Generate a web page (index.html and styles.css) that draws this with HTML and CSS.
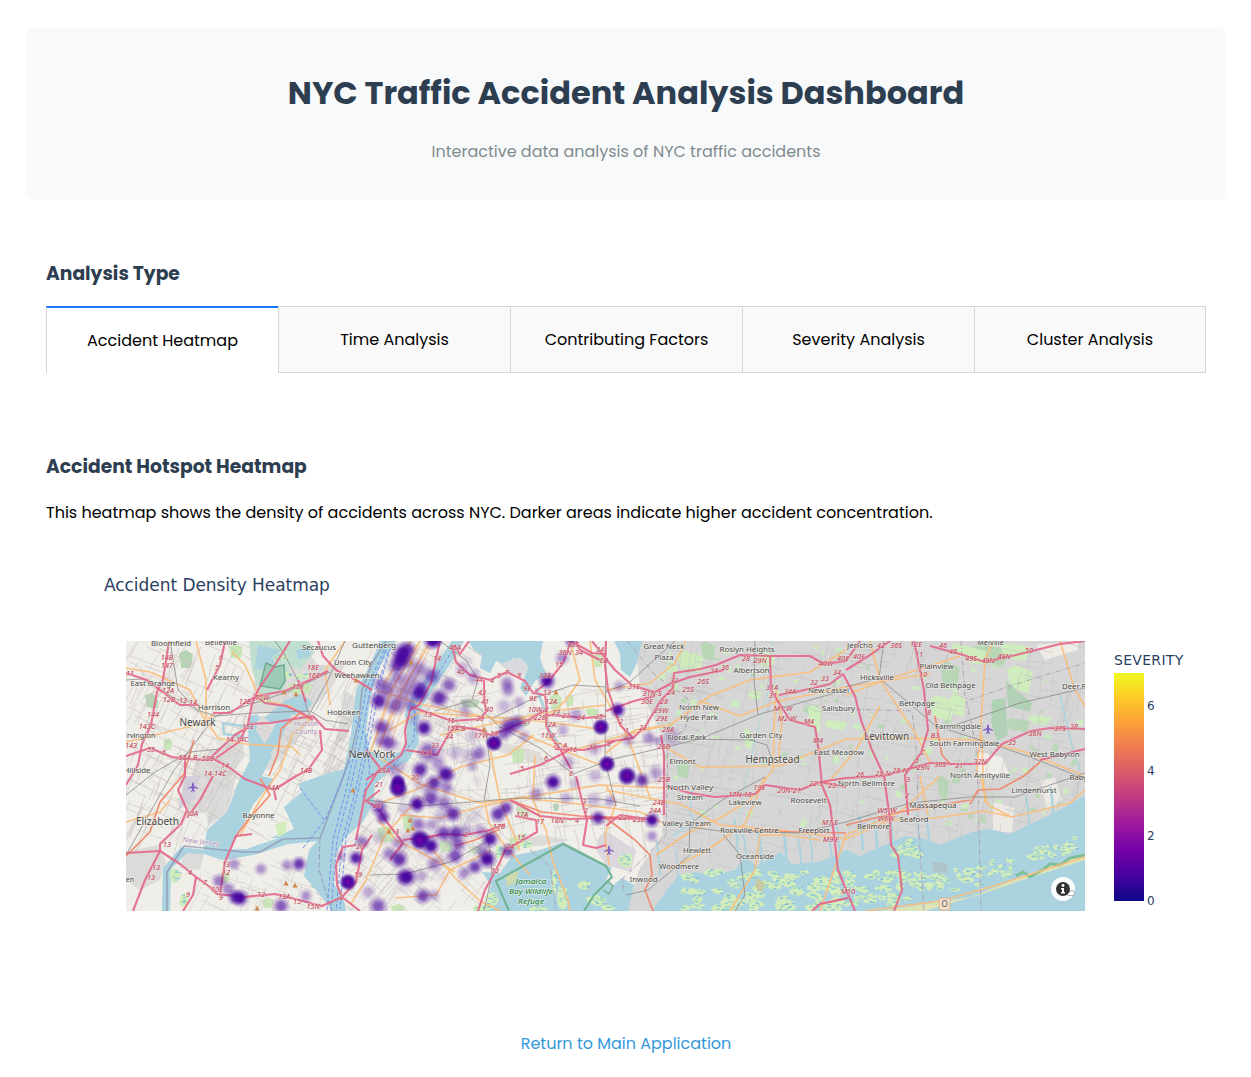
FILE: index.html
```html
<!DOCTYPE html>
<html lang="en">
<head>
<meta charset="utf-8">
<title>NYC Traffic Accident Analysis Dashboard</title>
<link rel="stylesheet" href="styles.css">
</head>
<body>
<main class="page">
  <header class="hero">
    <h1 class="hero-title">NYC Traffic Accident Analysis Dashboard</h1>
    <p class="hero-subtitle">Interactive data analysis of NYC traffic accidents</p>
  </header>
  <section class="analysis">
    <h3 class="heading">Analysis Type</h3>
    <nav class="tabs">
      <a class="tab tab-active">Accident Heatmap</a>
      <a class="tab">Time Analysis</a>
      <a class="tab">Contributing Factors</a>
      <a class="tab">Severity Analysis</a>
      <a class="tab">Cluster Analysis</a>
    </nav>
  </section>
  <section class="panel">
    <h3 class="heading">Accident Hotspot Heatmap</h3>
    <p class="description">This heatmap shows the density of accidents across NYC. Darker areas indicate higher accident concentration.</p>
    <div class="chart">
      <div class="chart-title">Accident Density Heatmap</div>
      <div class="chart-body">
        <svg class="map" id="map" viewBox="126 641 959 270" width="959" height="270"></svg>
        <div class="legend">
          <div class="legend-title">SEVERITY</div>
          <div class="legend-scale">
            <div class="legend-bar"></div>
            <div class="legend-ticks"><span>6</span><span>4</span><span>2</span><span>0</span></div>
          </div>
        </div>
      </div>
    </div>
  </section>
  <footer class="footer"><a class="return">Return to Main Application</a></footer>
</main>
<script src="map.js"></script>
</body>
</html>
```
FILE: styles.css
```css
* { box-sizing: border-box; }
body { margin: 0; background: #fff; color: #000; font-family: Poppins, Inter, sans-serif; font-size: 16px; }
.page { width: 1200px; margin: 0 25px 0 26px; padding-top: 28px; }
.hero { height: 172px; border-radius: 8px; background: #f8f9fb; text-align: center; padding-top: 40px; }
.hero-title { margin: 0; font-size: 32px; line-height: 50px; font-weight: 700; color: #2c3e50; }
.hero-subtitle { margin: 22px 0 0; line-height: 24px; color: #7f8c8d; }
.analysis, .panel { padding: 0 20px; }
.analysis { padding-top: 60px; }
.heading { margin: 0; font-size: 18.72px; line-height: 28px; font-weight: 700; color: #2c3e50; white-space: nowrap; }
.tabs { display: flex; height: 67px; margin-top: 18px; }
.tab { width: 232px; display: flex; align-items: center; justify-content: center; white-space: nowrap; background: #f9f9f9; border: 1px solid #d6d6d6; border-right: 0; }
.tab:last-child { border-right: 1px solid #d6d6d6; }
.tab-active { background: #fff; border-top: 2px solid #1975fa; border-bottom: 0; padding-bottom: 1px; }
.panel { padding-top: 80px; }
.description { margin: 20px 0 0; line-height: 24px; white-space: nowrap; }
.chart { padding: 48px 0 0 58px; font-family: Verdana, "DejaVu Sans", sans-serif; color: #2a3f5f; }
.chart-title { font-size: 17px; line-height: 24px; letter-spacing: -.05px; }
.chart-body { display: flex; gap: 29px; padding: 44px 0 0 22px; }
.map { display: block; flex: none; overflow: hidden; }
.legend { padding-top: 10px; }
.legend-title { font-size: 14px; line-height: 18px; letter-spacing: .3px; }
.legend-scale { display: flex; margin-top: 4px; gap: 3px; }
.legend-bar { width: 30px; height: 228px; background: linear-gradient(to top, #0d0887 0%, #46039f 11.1%, #7201a8 22.2%, #9c179e 33.3%, #bd3786 44.4%, #d8576b 55.6%, #ed7953 66.7%, #fb9f3a 77.8%, #fdca26 88.9%, #f0f921 100%); }
.legend-ticks { display: flex; flex-direction: column; gap: 49px; padding-top: 25px; font-size: 12px; line-height: 16px; }
.footer { padding-top: 121px; text-align: center; line-height: 24px; }
.return { color: #3498db; }
.map-label { font-family: "Noto Sans", sans-serif; fill: #484848; stroke: #f5f3ee; stroke-opacity: .65; stroke-width: 1.4px; paint-order: stroke; text-anchor: middle; }
.map-ref { font-family: "Noto Sans", sans-serif; font-size: 7.3px; font-style: italic; fill: #c0304a; stroke: #f0e6e4; stroke-opacity: .6; stroke-width: 1px; paint-order: stroke; text-anchor: middle; }
.map-region { fill: #ad8bb5; }
.map-park { fill: #2f8a45; font-style: italic; font-weight: 500; }
```
FILE: map.js
```js
const map = document.getElementById('map');
const parts = [];
let seed = 7;
const rnd = () => (seed = (seed * 16807) % 2147483647) / 2147483647;
const span = (a, b) => a + rnd() * (b - a);
const poly = (pts, fill, extra = '') => parts.push(`<polygon points="${pts}" fill="${fill}" ${extra}/>`);
const line = (pts, color, w, extra = '') => parts.push(`<polyline points="${pts}" fill="none" stroke="${color}" stroke-width="${w}" stroke-linejoin="round" ${extra}/>`);
const WATER = '#aad3df', MARSH = '#d2ecbb';

parts.push(`<defs>
<radialGradient id="heat"><stop offset="0" stop-color="#45039f"/><stop offset=".35" stop-color="#45039f" stop-opacity=".88"/><stop offset=".65" stop-color="#45039f" stop-opacity=".38"/><stop offset="1" stop-color="#45039f" stop-opacity="0"/></radialGradient>
<radialGradient id="hot"><stop offset="0" stop-color="#7a05a6"/><stop offset=".35" stop-color="#5402a3"/><stop offset=".6" stop-color="#3c0299" stop-opacity=".85"/><stop offset="1" stop-color="#45039f" stop-opacity="0"/></radialGradient>
<clipPath id="west"><path d="M126 641H612L640 690 662 735 665 790 662 835 640 868 625 911H126Z"/></clipPath>
<clipPath id="east"><path d="M636 641H1085V795L1035 820 1010 833 940 843 905 838 846 848 780 850 735 868 680 872 652 911H625L662 835 665 740Z"/></clipPath>
</defs>`);
parts.push('<rect x="126" y="641" width="959" height="270" fill="#f0eee8"/>');
poly('636,641 1085,641 1085,911 625,911 640,868 662,835 665,790 662,735 640,690', '#d6d6d6');

// built-up and industrial land west of the Hudson
['272,641 300,641 318,665 345,665 330,690 308,712 250,712 255,680','255,716 315,716 300,735 270,770 252,768','178,776 192,776 196,760 240,735 245,755 208,812 190,815','205,794 236,776 228,812 208,826','126,852 158,845 166,862 160,880 140,890 126,880','185,848 205,850 200,870 180,868','345,690 358,700 345,740 335,745','345,757 320,776 335,776','500,845 540,835 570,840 540,846'].forEach(p => poly(p, '#dcdbda'));
poly('186,776 200,776 194,800 178,810', '#d4cfdd');
poly('606,831 636,850 631,872 606,865 596,850 598,838', '#dcd6df');
poly('480,738 505,743 540,752 548,768 530,762 500,752', '#dfdcdb');

// parks
[[151,700,12,14],[168,744,9,12],[186,659,14,18],[154,703,9,10],[236,651,14,14],[300,688,25,11],[404,656,8,20],[386,834,18,16],[408,822,11,16],[518,755,14,16],[523,812,14,12],[556,703,12,20],[570,700,8,12],[470,703,20,9],[523,722,15,8],[446,846,14,11],[515,843,12,13],[556,807,6,8],[476,850,12,8],[398,911,14,14],[268,903,12,10],[225,877,10,11],[316,884,12,7],[592,712,13,8],[598,660,10,14],[540,672,12,9]].forEach(([x,y,w,h]) => poly(`${x-w/2},${y-h/3} ${x},${y-h/2} ${x+w/2},${y-h/4} ${x+w/3},${y+h/2} ${x-w/3},${y+h/2}`, rnd() > .45 ? '#c8e6b6' : '#b6d3b4'));
for (let i = 0; i < 150; i++) {
  const x = span(645, 1080), y = span(643, 825), w = span(2, 8), h = span(2, 8);
  poly(`${x},${y} ${x+w},${y+span(-2,2)} ${x+w*.8},${y+h} ${x-w*.2},${y+h*.8}`, rnd() > .3 ? '#cdeac0' : '#bad8b7', 'clip-path="url(#east)"');
}
[[690,662,28,22,0],[708,651,15,20,1],[766,660,18,18,0],[755,695,15,9,0],[748,739,9,22,0],[815,718,14,28,0],[836,725,24,10,0],[942,708,26,26,0],[958,705,16,25,0],[950,675,20,28,1],[990,655,40,22,1],[1015,652,30,18,0],[1020,679,26,28,0],[976,656,20,18,0],[1018,725,24,14,1],[960,650,18,14,0],[683,770,14,18,1],[943,787,12,24,1],[672,668,12,14,0],[1040,720,22,10,0]].forEach(([x,y,w,h,d]) => poly(`${x-w/2},${y-h/3} ${x-w/5},${y-h/2} ${x+w/2},${y-h/4} ${x+w/3},${y+h/2} ${x-w/3},${y+h/3}`, d ? '#b8d6b6' : '#cfecbd'));
poly('992,700 1005,698 1008,735 997,741 991,722', '#b0d2b4');
poly('1006,681 1032,703 1030,712 1008,706', '#b0d2b4');
poly('980,752 1002,757 1010,776 978,776 975,760', '#efede7');
poly('1036,645 1078,641 1078,650 1045,660', '#efebe5');
poly('1040,780 1055,778 1062,800 1047,810', '#ece9e4');
poly('994,802 1014,808 1012,832 992,832', '#ece9e4');

// local streets
const streets = (clip, x0, x1, y0, y1, n, color, ang, w) => {
  let d = '';
  for (let i = 0; i < n; i++) {
    const x = span(x0, x1), y = span(y0, y1), l = span(9, 42), a = ang + (rnd() > .5 ? Math.PI / 2 : 0) + span(-.12, .12);
    d += `M${x.toFixed(1)} ${y.toFixed(1)}q${(Math.cos(a)*l/2+span(-2,2)).toFixed(1)} ${(Math.sin(a)*l/2).toFixed(1)} ${(Math.cos(a)*l).toFixed(1)} ${(Math.sin(a)*l).toFixed(1)}`;
  }
  parts.push(`<g clip-path="url(#${clip})"><path d="${d}" fill="none" stroke="${color}" stroke-width="${w}"/></g>`);
};
streets('west', 126, 250, 641, 830, 240, '#c9c6c3', .45, .6);
streets('west', 270, 350, 700, 830, 120, '#c5c1bf', -1.05, .6);
streets('west', 200, 330, 855, 911, 60, '#cfccc9', .4, .6);
streets('west', 370, 470, 641, 800, 160, '#c8c4c5', .5, .6);
streets('west', 440, 665, 690, 830, 230, '#cbc7c6', -.15, .6);
streets('west', 345, 500, 800, 911, 160, '#cbc7c6', .7, .6);
streets('east', 640, 1085, 641, 870, 400, '#c4c4c4', .2, .6);

// water
poly('249,641 308,641 315,652 300,670 290,665 284,690 260,695 252,670', '#c0dfcf');
['258,645 280,650 270,672 255,668','286,700 300,694 313,702 306,712 290,716 272,724 264,718','296,650 312,645 310,656 298,660'].forEach(p => poly(p, WATER));
poly('249,716 258,714 256,730 272,756 262,776 274,779 253,805 238,835 227,853 203,853 207,830 227,812 238,784 250,760 248,737', WATER);
poly('278,720 292,713 282,737 270,754 260,752 270,735', WATER);
poly('162,911 163,868 181,847 205,850 246,849 282,837 320,835 320,841 288,844 254,855 222,860 204,854 187,853 171,869 170,911', WATER);
poly('380,641 396,641 378,669 370,700 366,730 369,750 384,758 402,751 407,738 405,714 413,693 432,671 449,645 452,641 464,641 453,660 438,682 422,706 417,724 419,743 408,761 389,772 375,784 374,802 363,822 345,838 335,855 334,884 344,900 346,911 332,911 322,897 304,876 309,850 319,839 270,838 294,829 284,807 302,792 298,784 320,776 344,769 351,735 356,690 370,665', WATER);
poly('468,641 543,641 540,658 546,675 535,681 526,696 520,688 527,670 513,658 506,666 496,661 490,673 480,668 482,655 474,650', WATER);
poly('500,664 520,657 529,667 522,677 508,671', '#d9dade');
poly('614,641 642,641 637,663 630,677 621,670 620,653', WATER);
line('536,688 545,710 549,730 560,746', WATER, 3);
line('245,737 224,734 223,723 248,727 260,717', WATER, 2.5);
poly('485,911 491,885 482,872 500,873 512,856 540,850 563,842 590,856 612,868 606,880 618,889 625,911', WATER);
poly('600,911 610,888 622,878 634,885 628,911', WATER);
poly('652,911 665,892 679,875 696,872 712,875 735,870 745,857 757,866 780,852 792,864 820,862 846,850 860,856 880,847 905,836 925,839 940,845 972,832 990,829 1010,834 1035,822 1060,810 1085,795 1085,911', WATER);
[[861,830],[876,836],[892,832],[918,828],[928,832],[1028,812],[1052,802],[785,845],[800,853],[811,848],[831,853],[838,836],[745,848],[736,833],[760,846],[658,855],[677,865]].forEach(([x,y]) => line(`${x-2},${y-15} ${x},${y-4} ${x+2},${y+20}`, WATER, span(1.3, 3)));
line('692,790 690,812 694,822 672,836', '#add5df', 1.5);
line('1060,695 1066,720 1072,745 1080,770', WATER, 1.5);
line('772,641 768,690 754,745 744,790 738,845', '#bad7da', 1.3);

// salt marsh islands
const marsh = (x, y, w, h) => {
  let pts = '';
  for (let k = 0; k < 9; k++) { const a = k * .698, r = span(.6, 1); pts += `${(x+Math.cos(a)*w*r).toFixed(1)},${(y+Math.sin(a)*h*r).toFixed(1)} `; }
  poly(pts, MARSH);
  for (let k = 0; k < w * h / 10; k++) { const a = x + span(-w*.6, w*.5), b = y + span(-h*.6, h*.6); line(`${a},${b} ${a+3},${b}`, '#69b5dc', .7); }
};
for (let i = 0; i < 80; i++) marsh(span(682, 850), span(871, 910), span(4, 10), span(2.5, 5.5));
for (let i = 0; i < 40; i++) marsh(span(848, 925), span(872, 905), span(4, 10), span(2.5, 5));
for (let i = 0; i < 30; i++) { const x = span(925, 1015); marsh(x, 898 - (x-925)*.25 - span(0, 20), span(3, 9), span(2, 4)); }
for (let i = 0; i < 22; i++) { const x = span(1030, 1080); marsh(x, 858 - (x-1030)*.28 + span(-8, 6), span(3, 8), span(2, 4)); }
for (let i = 0; i < 13; i++) marsh(span(892, 922), span(842, 875), span(3, 7), span(2, 5));
[[492,900,7,9],[482,908,14,5],[554,880,3,18],[562,897,7,14],[584,885,8,6],[596,900,12,7],[527,845,9,5],[538,909,12,3],[625,860,9,9],[608,908,9,4],[500,852,7,8],[521,839,6,9],[280,658,11,4],[302,676,10,4],[264,700,9,5],[286,675,7,5],[176,875,7,9],[184,900,6,8]].forEach(a => marsh(...a));
poly('266,663 275,667 284,665 285,681 280,689 260,686', '#9dcbb5', 'stroke="#70aa91" stroke-width="1.5"');
poly('505,875 519,871 515,882 507,887', '#cddaad');
poly('757,878 765,883 762,893 755,887', '#c6c8a2');
poly('932,862 946,863 948,873 934,872', '#afc4c8');
poly('275,824 286,821 286,833 278,837', MARSH);

// barrier beach and the open ocean south of it
poly('905,911 970,899 1021,880 1050,870 1085,855 1085,911', WATER);
poly('880,911 970,897 1021,877 1050,866 1085,853 1085,860 1054,870 1020,881 982,894 925,911', '#dce3b9');
line('1016,876 1023,872 1030,877 1044,869 1050,864 1060,865 1070,858 1085,855', '#7fbe9d', 3);

// district and ferry lines
line('167,911 167,872 184,846 243,852 260,852 283,839 320,838 343,777 352,750 359,720 362,690 372,664 386,641', '#8f8eae', 1.6, 'opacity=".7"');
line('320,838 319,870 332,911', '#9291af', .8, 'stroke-dasharray="6 2"');
[[0,0],[5,2],[-4,0],[9,-2]].forEach(([a,b]) => line(`${386+a/2},${650+b} ${370+a},${690+b} ${362+a},${735+b} ${350+a},${790+b} ${337+a},${840+b} ${331+a},${911+b}`, '#6a8bf0', 1.1, 'stroke-dasharray="4 2" opacity=".8"'));
['303,848 325,820 340,785 350,760','300,788 324,820','453,650 435,678 415,704 414,740 393,766 370,775','355,720 365,735 370,770 362,800'].forEach(p => line(p, '#7090ee', 1, 'stroke-dasharray="4 2"'));
['627,641 655,675 690,700 685,730 668,740 666,835 640,862 622,879 624,892','846,709 912,711 917,755 918,818 924,911','961,641 965,695 977,750 981,911','970,700 1016,684 1085,663','530,850 550,866 556,911'].forEach(p => line(p, '#b096b0', .9, 'stroke-dasharray="5 2 1 2"'));

// secondary roads
['126,668 150,672 190,690 202,715 218,738 245,744 292,747 300,755','196,641 206,680 206,718','126,742 200,724 214,715','126,822 160,812 170,800','232,652 245,665 256,690 270,702 290,706 310,720','240,836 260,800 280,770 292,735 312,718','345,641 325,670 330,705','420,641 391,690 370,754','431,641 402,690 378,750','411,641 383,685','376,690 425,705 490,718 520,733 600,765','390,730 420,712 470,716 520,719 570,725 605,730','440,735 500,722 560,710 606,705','570,641 580,680 565,701 545,720','534,735 508,755 460,767 415,790 380,803','545,737 574,750 625,735 663,726','380,758 420,784 480,803 540,795 600,785 665,788','400,815 440,818 486,805 520,798 570,803 640,812 665,824','535,755 533,800 546,830 553,862 568,900 570,911','430,846 455,878 480,901 500,911','395,898 436,895 450,870 490,851','350,905 366,880 385,835 420,797','378,820 396,840 422,853 455,872','485,803 489,823 505,846 530,875','490,750 500,800 520,850','606,785 616,803 605,835 609,865','590,641 595,680 627,735 651,800','606,753 635,730 670,725 710,696 750,680 810,672 846,650','606,690 650,683 675,663 686,641','665,747 700,767 780,766 846,739','606,790 680,804 720,825 780,830 846,839 890,820 935,818 985,811 1012,817 1070,803 1085,790','700,701 740,716 775,702 846,687 930,674','656,855 690,832 720,818 750,800 773,770 775,700','668,870 704,852 745,824 760,790 765,776','730,911 755,870 760,835 785,835 820,840','778,765 782,720 776,690','820,911 846,835 900,812 940,776','846,739 900,738 980,740 1025,752 1085,776','976,776 980,740 985,660 993,641','870,641 880,680 915,733 930,762','1060,641 1075,690 1085,706','846,695 880,682 960,656','826,785 856,750 880,706','920,776 928,815','980,776 988,805 1010,816','982,735 983,776 985,803','865,911 940,901 980,890 1022,877 1085,857'].forEach(p => line(p, '#fabf7c', 1.6, 'opacity=".95"'));
['126,856 150,832 160,802 184,774 194,740','269,776 278,753 281,729 300,713','236,836 248,820 270,795 260,778','606,818 635,840 650,855 652,875 645,890 653,911','935,716 942,755 951,765','500,829 475,840 455,846','510,800 542,812 580,816 640,818','970,804 978,790 1000,789 1024,776 1040,762','846,825 900,812 970,800','750,831 846,833'].forEach(p => line(p, '#ee8d72', 1.7));
[[-9,0],[-4,1],[1,2],[6,3]].forEach(([a,b]) => line(`${424+a},${645+b} ${402+a},${690+b} ${386+a},${737+b}`, '#f4c090', .9));

// railways
['126,680 142,679 171,696 197,710 216,716 253,713 310,711 325,720 348,724','126,855 174,770 216,716 290,691 330,672','170,641 178,690 199,712','275,641 285,655 300,685 309,715','345,641 328,680 309,715','435,711 470,701 486,714 500,727 540,748 573,774 610,760 700,739 760,714 846,690','440,641 466,660 478,680 472,700','493,718 534,698 573,685 606,687','484,911 492,875 490,850 486,831','486,730 490,765 484,800','126,795 155,772 190,752 220,749','366,800 420,806 520,798 600,799 640,806','606,641 605,760 616,806','755,641 754,680 758,715','370,875 405,874 450,862 490,840','689,853 690,824 722,800 765,777','606,692 630,682 655,659 675,641','690,827 720,831 800,833 846,822 910,803 970,797 1015,797 1085,773','723,834 740,855 745,895 735,911','626,895 648,890 670,872 690,855','750,740 767,745 773,763','668,739 755,740','846,687 879,678 884,641','879,678 936,726 980,740 1030,757 1085,779','952,726 1020,703 1085,688'].forEach(p => line(p, '#858585', 1, 'opacity=".75"'));

// motorways
['169,641 163,680 157,692 151,725 142,744 138,765 126,785','126,673 147,680 160,690 180,705 199,705','225,641 220,665 207,690','213,713 230,713 245,703 257,696 285,691 310,680 328,671','290,641 275,665 258,690 252,704 248,724 239,742 216,758','313,720 300,712 286,706 265,703 254,695','248,724 270,723 313,716','306,702 298,680','318,641 323,656 336,670 356,680 372,690','126,756 150,748 172,757 187,759 208,760 235,735 247,728','212,758 230,768 245,779 274,790 276,800','313,716 325,729 349,731','320,730 322,750 308,770 296,776 274,790','185,755 185,776 178,790 187,810 181,824 160,844 160,851 145,880 133,911','126,853 160,851 180,864 196,877 210,887 217,894 244,897 275,894 295,899 322,906 342,897','196,877 193,895 183,911','220,893 225,862 236,836 252,834','213,776 200,800 187,818','452,645 456,662 470,675 490,680 507,672 525,681 533,693 545,695 547,709 546,725 552,738 560,749 571,769','469,641 460,654 454,645','484,680 484,695 486,712 480,719 452,721 432,714 411,707','440,641 431,683 419,705 410,710 405,730 406,744 401,755 382,769 366,780','406,750 437,755 448,735 455,726 480,730 490,735 502,731 530,719 545,710','571,641 563,663 548,682 535,692','545,715 565,716 585,718 606,716','606,640 605,665 608,690 620,725 633,738 645,727 661,700 673,688 674,673 700,669 716,665 740,655 770,656 810,656 824,664 846,661 860,641','592,641 606,659 615,670 633,686 655,692 670,684 690,677 710,673 724,670','606,711 634,701 655,696','606,742 633,738','571,641 592,653 606,654','661,735 664,755 664,815','555,749 584,750 606,745 615,741','510,774 540,765 560,755 570,749','366,750 380,768 366,790 356,840','342,897 360,911','380,790 366,801 378,808 386,821 397,835 403,843 390,860','420,840 442,834 465,835 490,830 505,824','403,840 440,835','356,845 343,847 336,865 337,885 342,897','342,897 356,882 362,850 372,835','515,816 536,820 537,832 523,840 505,850 500,862 485,890 478,911','510,800 540,816 570,819 600,818 642,819','576,641 580,650 600,660','576,776 582,801 587,820 583,845 596,848 606,845','606,826 620,815 655,820','666,786 690,793 715,797 755,794 765,785 800,790 820,782 846,787','770,656 771,690 779,703 790,720 815,727 818,745 822,785 830,805 834,835 838,870 855,911','779,695 800,691 830,684 843,674','843,674 855,696 861,720 872,750 884,776 890,820 891,845 898,856 902,890 894,911','846,670 870,655 890,641','914,641 924,690 928,730 921,753 905,775 908,815','820,782 846,778 884,776 905,770 930,763 955,764 985,764 1002,744 1031,731 1050,728 1085,729','930,646 960,654 985,662 1020,654 1060,644 1085,641','1085,749 1040,760'].forEach(p => line(p, '#e4688a', 2.1, 'opacity=".92"'));
line('812,911 820,904 848,898', '#e4688a', 2.1);

// refuge boundary
line('509,911 496,881 563,844 606,866 612,877 594,895 584,911', '#72b293', 2);
line('607,880 613,886 609,894 603,890', '#72b293', 1.4);

// hot spots: x, y, radius, strength
[[403,653,12,.95],[401,660,12,.95],[397,666,10,.7],[408,649,10,.7],[432,641,10,1],[436,641,8,.8],[379,701,11,.9],[387,689,12,.55],[380,684,10,.4],[419,693,11,.95],[421,687,9,.6],[439,698,11,.8],[431,676,11,.6],[449,685,10,.6],[396,705,12,.6],[397,678,10,.45],[410,681,13,.4],[418,668,13,.35],[404,693,13,.4],[381,727,10,.7],[382,740,9,.4],[389,743,10,.7],[410,705,9,.45],[424,728,10,.95],[428,752,13,.65],[438,764,10,.4],[420,770,10,.85],[445,774,10,.9],[509,727,11,.8],[517,723,10,.65],[503,734,9,.55],[524,736,8,.3],[479,753,10,.5],[472,766,8,.3],[507,683,9,.45],[508,690,9,.45],[465,712,9,.25],[462,670,9,.3],[473,678,9,.25],[504,706,10,.25],[519,702,8,.3],[455,753,9,.25],[547,681,10,1],[571,641,8,.7],[562,658,9,.4],[576,715,9,.35],[618,710,9,1],[619,686,8,.3],[594,749,9,.3],[568,762,9,.3],[628,740,9,.3],[649,738,9,.4],[658,741,7,.3],[672,737,11,.3],[642,780,9,.8],[656,773,10,.35],[652,820,9,1],[652,836,8,.4],[610,801,8,.35],[395,770,11,.35],[417,804,10,1],[434,783,10,.8],[448,775,9,.6],[446,787,9,.45],[431,798,11,.7],[444,803,10,.5],[453,814,10,.8],[379,808,10,.7],[383,817,9,.8],[498,814,10,.8],[506,808,9,.75],[553,782,10,1],[536,794,9,.4],[566,798,8,.3],[594,800,10,.25],[598,818,9,.85],[431,846,10,1],[444,833,10,.65],[456,833,10,.75],[458,844,10,.6],[455,856,10,.7],[466,831,9,.3],[480,831,9,.35],[490,839,10,.95],[508,851,9,.7],[487,859,11,1],[475,867,9,.75],[482,850,9,.4],[464,873,8,.35],[434,864,10,.45],[399,859,11,.8],[389,854,9,.45],[407,877,11,1],[403,877,9,.7],[421,876,9,.3],[423,896,10,.7],[434,895,8,.3],[378,906,11,.65],[418,824,9,.5],[432,824,8,.3],[397,843,8,.35],[356,858,9,.9],[362,842,9,.5],[341,856,7,.3],[368,892,9,.3],[299,864,9,.8],[287,865,8,.4],[261,869,8,.4],[234,864,8,.4],[219,881,9,.5],[228,889,9,.45],[240,898,10,1],[235,897,9,.8],[281,906,10,.65],[306,896,8,.4],[563,730,8,.3],[595,776,9,.25],[575,783,8,.2],[440,817,9,.25]].forEach(([x,y,r,o]) => parts.push(`<circle cx="${x}" cy="${y}" r="${r}" fill="url(#heat)" opacity="${o}"/>`));
for (let i = 0; i < 60; i++) parts.push(`<circle cx="${span(376, 478)}" cy="${span(655, 890)}" r="${span(6, 11)}" fill="url(#heat)" opacity="${span(.06, .2)}"/>`);
[[494,743,9],[601,727,9],[607,764,9],[627,776,10],[398,782,8],[398,788,10],[420,840,11],[348,882,9]].forEach(([x,y,r]) => parts.push(`<circle cx="${x}" cy="${y}" r="${r}" fill="url(#hot)"/>`));

// peaks and airports
[[284,692],[296,694],[411,662],[356,680],[484,729],[556,692],[389,831],[410,820],[408,830],[413,828],[286,883],[295,885],[257,908],[353,790]].forEach(([x,y]) => poly(`${x-2.5},${y+2.5} ${x},${y-2.5} ${x+2.5},${y+2.5}`, '#ce8850'));
[[193,787],[609,850],[988,729]].forEach(([x,y]) => parts.push(`<path transform="translate(${x} ${y})" d="M0-5L1-3V-1L5 1V2L1 1V3L2 4V5L0 4-2 5V4L-1 3V1L-5 2V1L-1-1V-3Z" fill="#8461c4"/>`));

// place names: text, centre x, baseline, size, width
const label = (t, x, y, s, w, c = '') => parts.push(`<text class="map-label ${c}" x="${x}" y="${y}" font-size="${s}" textLength="${w}" lengthAdjust="spacingAndGlyphs">${t}</text>`);
[['Bloomfield',171,645.5,7.5,40],['Belleville',221,645,7.5,32],['Secaucus',319,650,7.5,34],['Guttenberg',374,648,7.5,44],['Union City',353,665,7.5,38],['Weehawken',357,678,7.5,45],['Kearny',226,680,7.5,26],['East Orange',153,686,7.5,45],['Harrison',214,710,7.5,32],['Newark',197.5,726,10,36],['Hoboken',344,715,7.5,34],['Irvington',140,738,7.5,31],['Hillside',137,773,7.5,27],['New York',372,758,10.5,47],['Elizabeth',157.5,825,10,43],['Bayonne',258.5,818,7.5,32],['Linden',123,882,7.5,22],
['Great Neck',664,649,7.5,41],['Plaza',664,660,7.5,19],['Roslyn Heights',747,652,7.5,55],['Albertson',751.5,673,7.5,36],['North New',699,710,7.5,40],['Hyde Park',699,720,7.5,38],['New Cassel',828.5,693,7.5,41],['Salisbury',838.5,711,7.5,33],['Floral Park',687,740,7.5,39],['Garden City',761,738,7.5,43],['East Meadow',839,755,7.5,50],['Elmont',682.5,764,7.5,26],['Hempstead',772.5,763,10,54],['North Valley',690,790,7.5,46],['Stream',690,800,7.5,26],['Lakeview',745,805,7.5,33],['Roosevelt',808.5,803,7.5,36],['Valley Stream',686.5,825.5,7.5,49],['Rockville Centre',749.5,833,7.5,59],['Freeport',814,833,7.5,31],['Hewlett',697,853,7.5,28],['Oceanside',755,859,7.5,38],['Woodmere',679,868.5,7.5,40],['Inwood',643.5,882,7.5,28],['Jericho',860,648,7.5,26],['Melville',990.5,645,7.5,27],['Plainview',936.5,669,7.5,34],['Hicksville',877,680,7.5,34],['Old Bethpage',950.5,688,7.5,50],['Bethpage',917,706,7.5,36],['Deer Park',1080,689,7.5,36],['Farmingdale',958,729,7.5,46],['Levittown',886.5,739.5,10,45],['South Farmingdale',964.5,746,7.5,70],['West Babylon',1054.5,757,7.5,50],['North Amityville',980,778,7.5,60],['Lindenhurst',1034,793,7.5,45],['Babylon',1084,780,7.5,29],['North Bellmore',866.5,786,7.5,57],['Massapequa',933,808,7.5,47],['Seaford',914,822,7.5,29],['Bellmore',873.5,829,7.5,33]].forEach(a => label(...a));
label('Hudson', 306, 726, 7, 24, 'map-region'); label('County', 306, 734, 7, 22, 'map-region');
parts.push('<text class="map-label map-region" font-size="7" transform="translate(201 844) rotate(7)" textLength="37">New Jersey</text>');
label('Jamaica', 531, 883.5, 7.5, 31, 'map-park'); label('Bay Wildlife', 531, 894, 7.5, 44, 'map-park'); label('Refuge', 531, 904, 7.5, 26, 'map-park');

// junction numbers
'14B,167,660;147,167,668;6,221,660;5,217,670;11,130,676;12A,168,693;12B,169,702;13,183,703;14,193,705;144,153,717;143C,147,729;143,131,748;55,151,752;6,164,755;58A-B,188,760;58B,208,761;14-14C,237,742;15E,248,729;14,225,768;14-14C,215,776;15W,262,700;12B,245,704;15X,298,689;18E,313,670;16E,314,678;14B,306,773;13A,192,816;13,167,847;13,156,870;13,151,880;4,190,875;7,205,885;9,188,897;12,226,875;13,226,867;10E,217,892;9,221,900;12,261,897;13A,284,899;15,297,904;15N,313,909;14A,273,790;2,342,900;19,358,877;20,360,849;46A,455,650;14,437,661;45,461,674;44,479,682;5,499,678;4,492,683;7,507,675;8,519,678;43,482,695;41,485,704;40,489,712;39,480,721;15,451,723;13,428,717;15A-B,456,731;34,449,739;33,435,748;32A,426,755;21,527,724;22B,540,720;10W-E,538,712;12A,551,704;9E,527,691;9E,533,701;13A,545,678;13,547,695;15,559,667;36N,565,655;34,579,655;23,556,715;23,566,718;24,581,720;25,599,719;12A,550,727;11W,548,738;7C-A,560,748;16,573,752;18,593,750;19,494,736;17W,481,738;6,546,761;5,522,771;28A,384,773;6,571,776;36S,573,647;34,600,652;6B,604,663;30,415,780;21,379,787;26,377,808;3,397,834;2,466,837;17B,499,829;17A,522,817;17,540,824;18N,557,823;15,521,840;24,510,849;13,495,873;3,584,804;2,586,813;4,577,823;31E,634,689;31N-S,652,696;30E,647,704;29W,661,713;29E,662,721;28A,668,732;28,664,704;24,671,695;25S,688,692;26S,703,684;32,674,683;34,714,673;36,725,670;28,746,661;29N,760,663;22,643,730;2,621,724;1,627,733;9,609,746;26D,664,749;31A,772,690;31,773,698;34A,790,694;32,814,685;33,825,681;34,837,675;40W,826,666;40E,843,661;M1 W,783,711;M2 W,787,721;M4,809,724;M4,818,743;17N-18,740,797;19S,759,790;20N-21,789,793;22-S,816,786;23,832,788;24B,659,805;24A,655,813;23B,639,822;22,623,820;25B,664,782;M7 E,830,825;M9 E,831,842;42,881,648;36S,896,648;40E,859,659;12E,916,647;11,919,657;10,923,677;8,929,715;46,943,648;48,953,654;49S,971,661;49N,988,663;49N,1004,659;50,1029,653;C,923,755;B3,935,738;5,917,763;29N,923,770;30S,940,767;31,959,768;32N,980,764;35,1012,745;36N,1035,736;37S,1060,731;38,1074,729;28-N,900,773;28-N,883,776;3,908,782;2,907,798;W5-W,887,813;W6W,886,821;M10,848,894;26,860,777'.split(';').forEach(s => { const [t,x,y] = s.split(','); parts.push(`<text class="map-ref" x="${x}" y="${y}">${t}</text>`); });
parts.push('<rect x="939" y="898" width="11" height="12" rx="2" fill="#f6dcc0" stroke="#cfa77d" stroke-width=".7"/><text class="map-label" x="944.5" y="907" font-size="8">O</text>');

// attribution button
parts.push('<circle cx="1063" cy="889" r="12" fill="#fff" opacity=".93"/><rect x="1067" y="891" width="7.5" height="4.5" rx="1.5" fill="#fff" stroke="#999" stroke-width=".8"/><circle cx="1063" cy="889" r="7" fill="#333"/><circle cx="1063" cy="885.5" r="1.4" fill="#fff"/><path d="M1061 888h3v4h1v1.5h-4V892h1v-2.500h-1Z" fill="#fff"/>');
map.innerHTML = parts.join('');
```
